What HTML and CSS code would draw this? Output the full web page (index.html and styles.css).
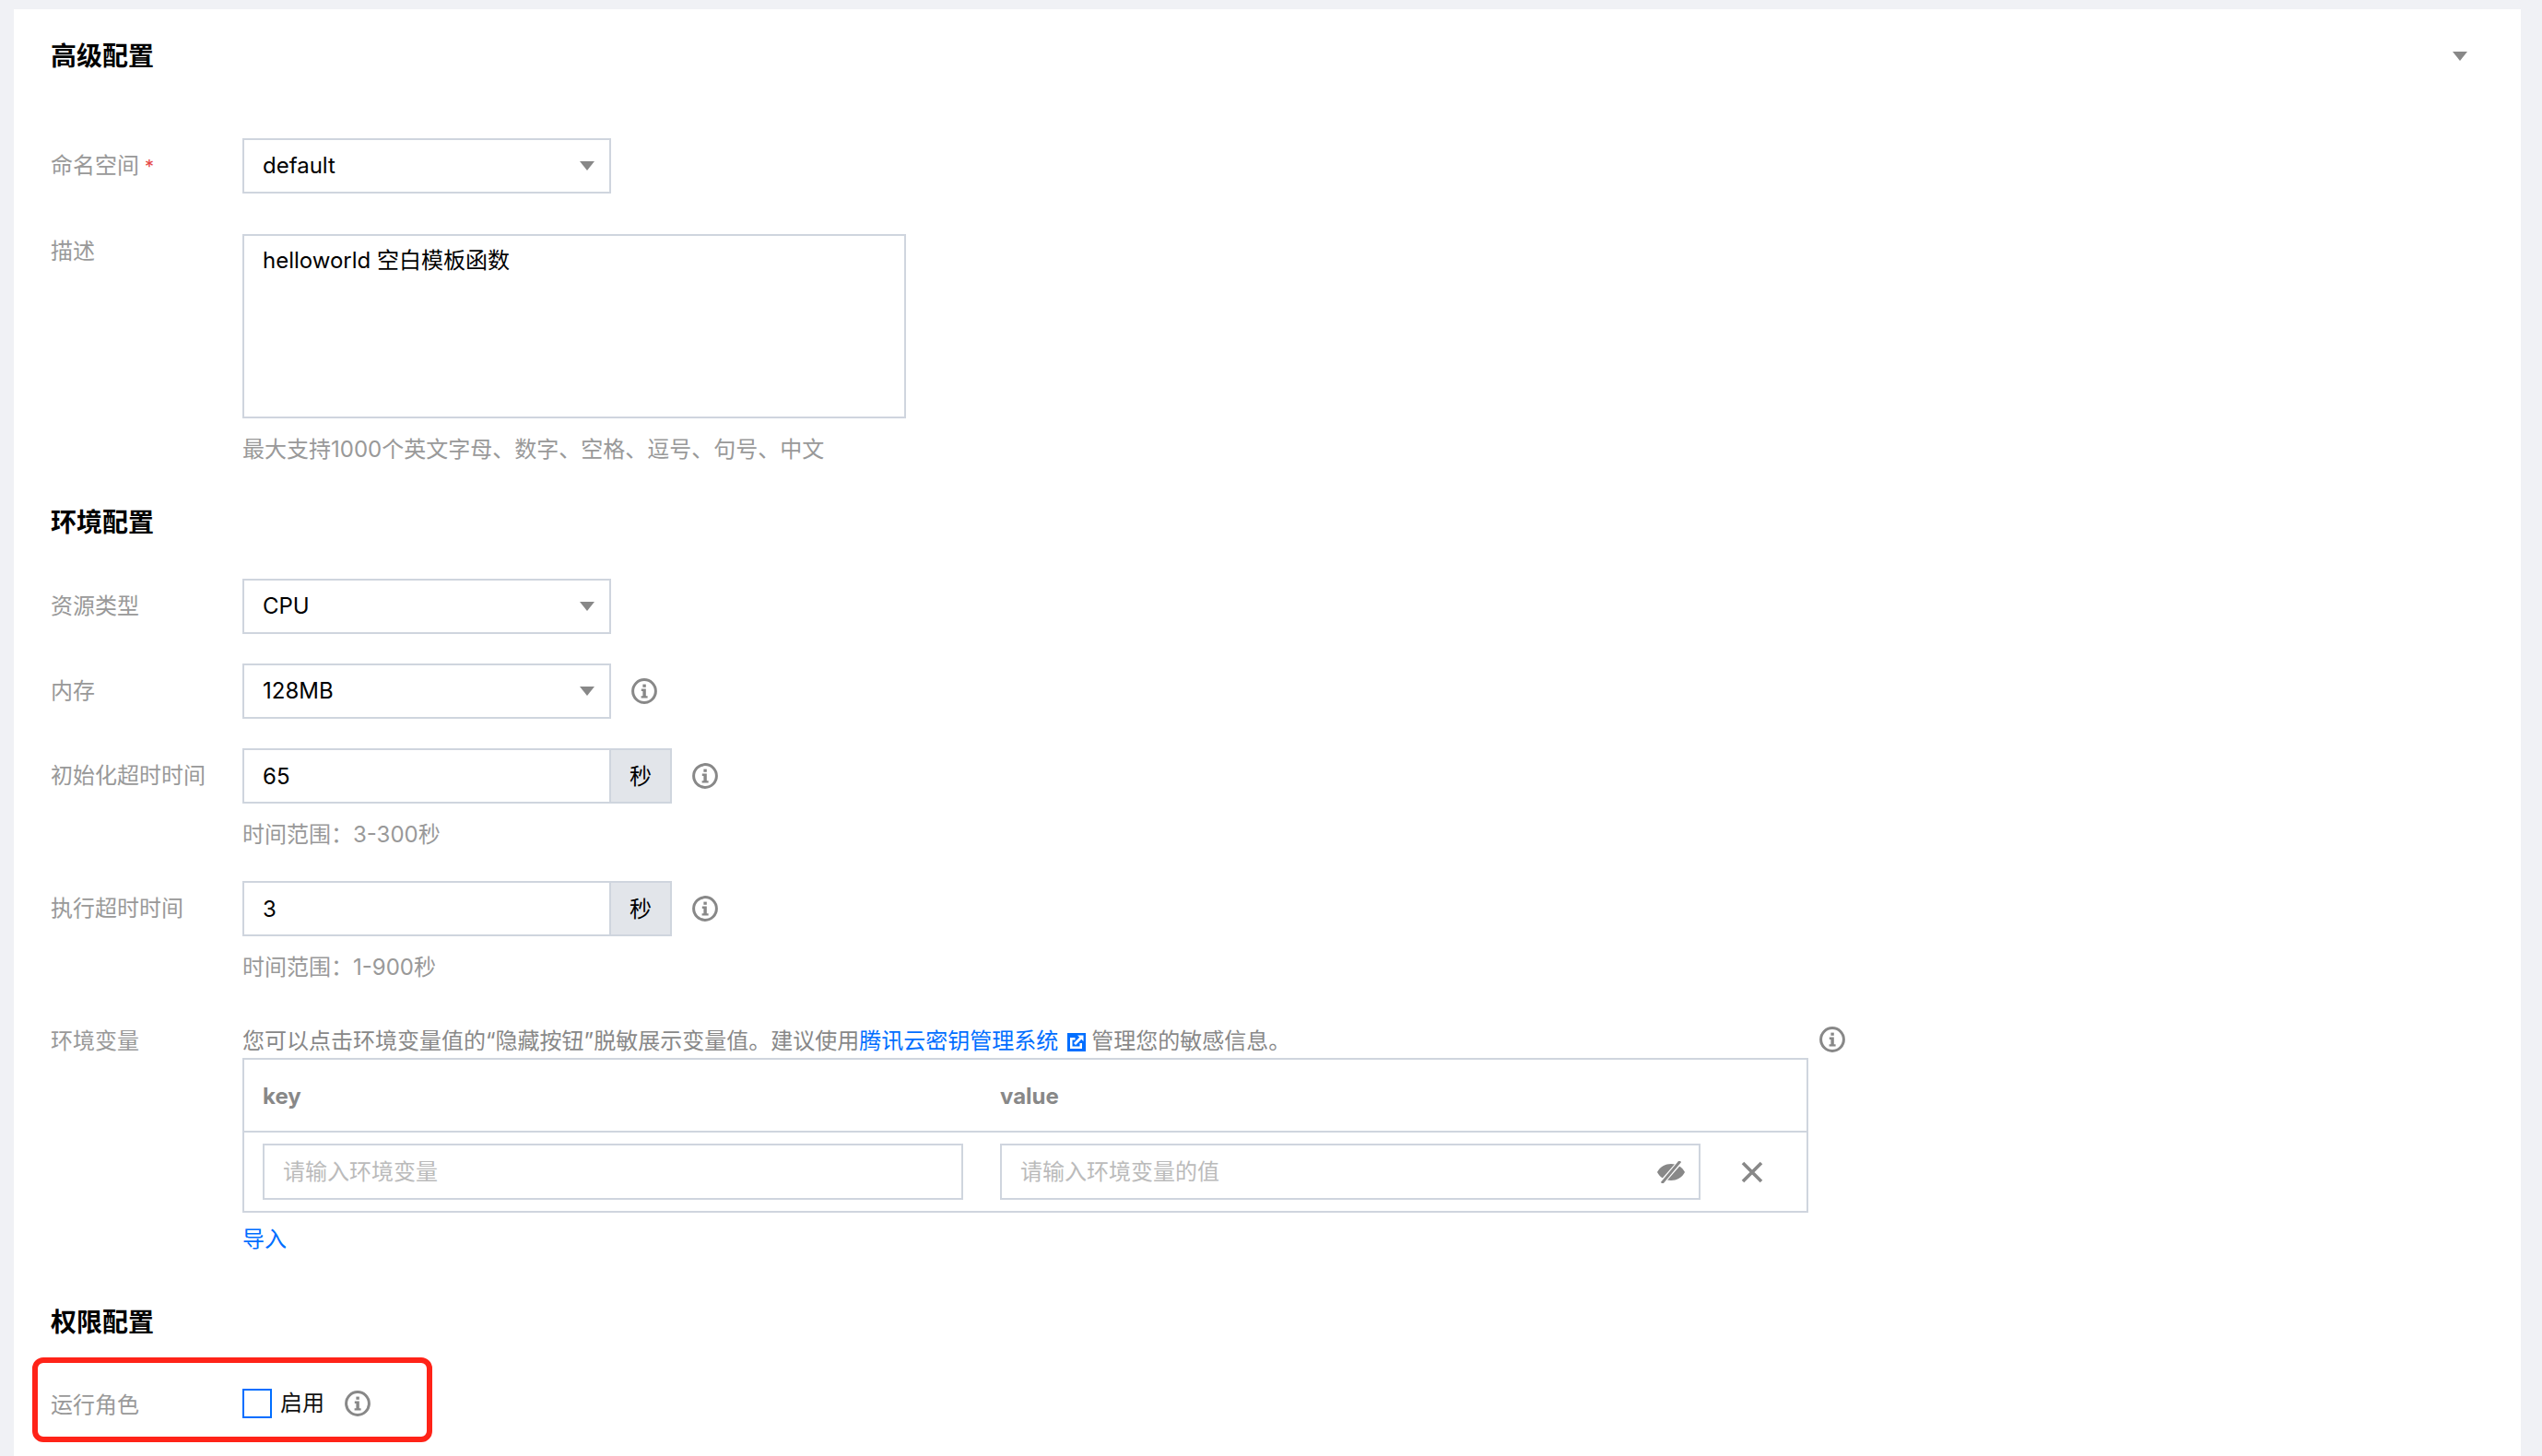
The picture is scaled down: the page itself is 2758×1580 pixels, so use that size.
FILE: index.html
```html
<!DOCTYPE html>
<html lang="zh-CN">
<head>
<meta charset="utf-8">
<title>高级配置</title>
<link rel="stylesheet" href="styles.css">
</head>
<body>
<svg class="defs" width="0" height="0" aria-hidden="true">
  <symbol id="info" viewBox="0 0 28 28">
    <circle cx="14" cy="14" r="12.4" fill="none" stroke="currentColor" stroke-width="3"/>
    <rect x="12.400" y="6.600" width="3.400" height="3.200" fill="currentColor"/>
    <path d="M10.800 11.600h5v7.600h1.800v2.400h-7v-2.400h1.800v-5.200h-1.600z" fill="currentColor"/>
  </symbol>
  <symbol id="caret" viewBox="0 0 16 10">
    <path d="M0 0h16L8 10z" fill="currentColor"/>
  </symbol>
</svg>
<main class="card">
  <header class="section-head">
    <h2 class="title">高级配置</h2>
    <svg class="caret"><use href="#caret"/></svg>
  </header>

  <div class="row first-row">
    <label class="label">命名空间<span class="req">*</span></label>
    <div class="select"><span>default</span><svg class="caret"><use href="#caret"/></svg></div>
  </div>
  <div class="row desc-row">
    <label class="label top">描述</label>
    <div class="col">
      <textarea class="textarea" readonly>helloworld 空白模板函数</textarea>
      <p class="hint">最大支持1000个英文字母、数字、空格、逗号、句号、中文</p>
    </div>
  </div>

  <h2 class="title section-title">环境配置</h2>
  <div class="row after-title">
    <label class="label">资源类型</label>
    <div class="select"><span>CPU</span><svg class="caret"><use href="#caret"/></svg></div>
  </div>
  <div class="row gap">
    <label class="label">内存</label>
    <div class="select"><span>128MB</span><svg class="caret"><use href="#caret"/></svg></div>
    <svg class="info"><use href="#info"/></svg>
  </div>
  <div class="row gap">
    <label class="label">初始化超时时间</label>
    <div class="col">
      <div class="input-group">
        <input class="num" value="65" readonly>
        <span class="addon">秒</span>
        <svg class="info"><use href="#info"/></svg>
      </div>
      <p class="hint">时间范围：3-300秒</p>
    </div>
  </div>
  <div class="row gap">
    <label class="label">执行超时时间</label>
    <div class="col">
      <div class="input-group">
        <input class="num" value="3" readonly>
        <span class="addon">秒</span>
        <svg class="info"><use href="#info"/></svg>
      </div>
      <p class="hint">时间范围：1-900秒</p>
    </div>
  </div>
  <div class="row env-row">
    <label class="label line">环境变量</label>
    <div class="col">
      <p class="env-note">您可以点击环境变量值的“隐藏按钮”脱敏展示变量值。建议使用<a class="link" href="#">腾讯云密钥管理系统<svg class="ext" viewBox="0 0 20 20"><path d="M0 0h20v20H0z" fill="currentColor"/><path d="M3 5h5.500v2.500H5.500v7h8V11H16v6H3z" fill="#fff"/><path d="M8 12 15 5" stroke="#fff" stroke-width="3" fill="none"/><path d="M11 2.500h6.500V9z" fill="#fff"/></svg></a>管理您的敏感信息。</p>
      <div class="env-table">
        <div class="env-head"><b>key</b><b>value</b></div>
        <div class="env-body">
          <input class="cell" placeholder="请输入环境变量" readonly>
          <div class="cell value-cell">
            <input class="bare" placeholder="请输入环境变量的值" readonly>
            <svg class="eye" viewBox="0 0 30 24"><path d="M0 12C6 0 24 0 30 12 24 24 6 24 0 12z" fill="#888"/><path d="M4.500 24 25.500 0" stroke="#fff" stroke-width="5.500" fill="none"/><path d="M5 24 25 0" stroke="#888" stroke-width="3" fill="none"/></svg>
          </div>
          <svg class="close" viewBox="0 0 24 24"><path d="M2 2 22 22M22 2 2 22" stroke="#888" stroke-width="3.600" fill="none"/></svg>
        </div>
      </div>
      <a class="link import" href="#">导入</a>
    </div>
    <svg class="info env-info"><use href="#info"/></svg>
  </div>

  <h2 class="title perm-title">权限配置</h2>
  <div class="row role-row">
    <label class="label">运行角色</label>
    <span class="checkbox"></span>
    <span class="check-text">启用</span>
    <svg class="info"><use href="#info"/></svg>
    <div class="highlight"></div>
  </div>
</main>
</body>
</html>
```
FILE: styles.css
```css
* { box-sizing: border-box; }
html, body { height: 100%; }
body {
  margin: 0;
  padding: 10px 23px 0 15px;
  background: #f0f1f5;
  overflow: hidden;
  font: 24px/36px Inter, "Noto Sans CJK SC", sans-serif;
  color: #000;
}
.defs { position: absolute; }
.card {
  position: relative;
  height: 1570px;
  padding: 31px 58px 0 40px;
  background: #fff;
}
.section-head { display: flex; justify-content: space-between; align-items: center; }
.title { margin: 0; font-size: 28px; line-height: 40px; font-weight: 700; color: #000; }
.caret { width: 16px; height: 10px; color: #888; flex: none; }
.row { display: flex; align-items: center; position: relative; }
.label { width: 208px; flex: none; color: #999; }
.label.top { align-self: flex-start; margin-top: 1px; }
.label.line { align-self: flex-start; }
.req { margin-left: 6px; color: #e54545; font-size: 20px; }
.first-row { margin-top: 69px; }
.desc-row { margin-top: 44px; align-items: flex-start; }
.col { display: flex; flex-direction: column; align-items: flex-start; }
.select {
  width: 400px; height: 60px; padding: 0 16px 0 20px;
  display: flex; align-items: center; justify-content: space-between;
  border: 2px solid #cfd5de; background: #fff;
}
.textarea {
  display: block; width: 720px; height: 200px; padding: 9px 20px;
  border: 2px solid #cfd5de; outline: 0; resize: none;
  font: inherit; color: #000; background: #fff;
}
.hint { margin: 16px 0 0; color: #999; }
.section-title { margin-top: 41px; }
.after-title { margin-top: 41px; }
.gap { margin-top: 32px; align-items: flex-start; }
.gap > .label { line-height: 60px; }
.gap > .info { align-self: center; }
.info { width: 28px; height: 28px; margin-left: 22px; color: #888; flex: none; }
.input-group { display: flex; align-items: center; }
.num {
  width: 400px; height: 60px; padding: 0 20px;
  border: 2px solid #cfd5de; outline: 0; font: inherit; color: #000;
}
.addon {
  width: 68px; height: 60px; margin-left: -2px; padding-top: 2px;
  display: flex; align-items: center; justify-content: center;
  border: 2px solid #cfd5de; background: #e2e5ea; color: #000;
}
.env-row { margin-top: 44px; align-items: flex-start; }
.env-note { margin: 0; color: #888; white-space: nowrap; }
.link { color: #006eff; text-decoration: none; }
.ext { width: 20px; height: 20px; margin: 0 6px 0 10px; vertical-align: -3px; color: #006eff; }
.env-table { width: 1699px; height: 168px; border: 2px solid #cfd5de; }
.env-head {
  height: 79px; padding: 2px 20px 0; display: flex; align-items: center;
  border-bottom: 2px solid #cfd5de; color: #888;
}
.env-head b { width: 800px; font-weight: 700; }
.env-head b + b { width: auto; }
.env-body { display: flex; align-items: center; height: 85px; padding: 0 20px; }
.cell {
  width: 760px; height: 61px; flex: none; padding: 0 20px;
  border: 2px solid #cfd5de; outline: 0; font: inherit; color: #000;
}
.cell + .cell { margin-left: 40px; }
.value-cell { display: flex; align-items: center; padding-right: 15px; }
.bare { flex: 1; min-width: 0; border: 0; padding: 0; outline: 0; font: inherit; }
input::placeholder { color: #bbb; opacity: 1; }
.eye { width: 30px; height: 24px; flex: none; }
.close { width: 24px; height: 24px; margin-left: 44px; flex: none; }
.import { margin-top: 11px; }
.env-info { margin: 2px 0 0 12px; }
.perm-title { margin-top: 52px; }
.role-row { margin-top: 38px; height: 60px; }
.role-row .label { margin-top: 4px; }
.checkbox { width: 32px; height: 32px; border: 2px solid #006eff; background: #fff; flex: none; }
.check-text { margin-left: 9px; color: #111; }
.role-row .info { margin-left: 22px; }
.highlight {
  position: absolute; left: -20px; top: -20px; width: 434px; height: 92px;
  border: 6px solid #ff2318; border-radius: 12px; pointer-events: none;
}
```
